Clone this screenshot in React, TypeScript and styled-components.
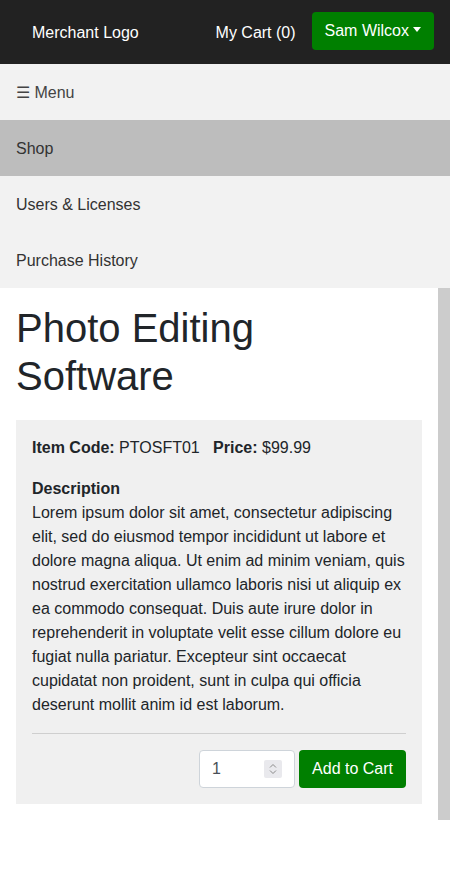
import styled, { createGlobalStyle } from 'styled-components';

const GlobalStyle = createGlobalStyle`
  * { box-sizing: border-box; }
  body {
    margin: 0;
    font-family: 'Liberation Sans', Arial, sans-serif;
    font-size: 16px;
    line-height: 1.5;
    color: #212529;
    background: #fff;
  }
`;

const navItems = ['Shop', 'Users & Licenses', 'Purchase History'];

export default function App() {
  return (
    <>
      <GlobalStyle />
      <TopBar>
        <Brand>Merchant Logo</Brand>
        <TopRight>
          <CartLink>My Cart (0)</CartLink>
          <UserButton>Sam Wilcox</UserButton>
        </TopRight>
      </TopBar>
      <SideNav>
        <NavRow $muted>☰ Menu</NavRow>
        {navItems.map(item => (
          <NavRow key={item} $active={item === 'Shop'}>
            {item}
          </NavRow>
        ))}
      </SideNav>
      <ContentRow>
        <Main>
          <Title>Photo Editing Software</Title>
          <ProductCard>
            <Meta>
              <b>Item Code:</b> PTOSFT01 &nbsp; <b>Price:</b> $99.99
            </Meta>
            <Description>
              <b>Description</b>
              <br />
              Lorem ipsum dolor sit amet, consectetur adipiscing elit, sed do eiusmod tempor
              incididunt ut labore et dolore magna aliqua. Ut enim ad minim veniam, quis nostrud
              exercitation ullamco laboris nisi ut aliquip ex ea commodo consequat. Duis aute irure
              dolor in reprehenderit in voluptate velit esse cillum dolore eu fugiat nulla pariatur.
              Excepteur sint occaecat cupidatat non proident, sunt in culpa qui officia deserunt
              mollit anim id est laborum.
            </Description>
            <Divider />
            <CartActions>
              <QtyWrap>
                <QtyInput type='number' defaultValue={1} min={1} />
                <Spinner aria-hidden>
                  <svg width='18' height='18' viewBox='0 0 18 18' fill='none'>
                    <path d='M6 7.5 9 4.5l3 3' stroke='#8a8a8a' strokeWidth='1' />
                    <path d='M6 10.5l3 3 3-3' stroke='#8a8a8a' strokeWidth='1' />
                  </svg>
                </Spinner>
              </QtyWrap>
              <AddButton>Add to Cart</AddButton>
            </CartActions>
          </ProductCard>
        </Main>
        <Gutter />
      </ContentRow>
    </>
  );
}

const TopBar = styled.header`
  height: 64px;
  background: #222222;
  display: flex;
  align-items: center;
  justify-content: space-between;
  padding: 1px 16px 0 32px;
`;

const Brand = styled.span`
  color: #fff;
  font-size: 16px;
`;

const TopRight = styled.div`
  display: flex;
  align-items: center;
  gap: 16px;
`;

const CartLink = styled.span`
  color: #fff;
  font-size: 16px;
`;

const UserButton = styled.button`
  font-family: inherit;
  font-size: 16px;
  line-height: 24px;
  height: 38px;
  margin-bottom: 3px;
  padding: 6px 13px;
  border: none;
  border-radius: 4px;
  background: #007f00;
  color: #fff;
  display: flex;
  align-items: center;

  &::after {
    content: '';
    display: inline-block;
    margin-left: 4px;
    margin-top: -4px;
    border-top: 5px solid #fff;
    border-left: 4px solid transparent;
    border-right: 4px solid transparent;
  }
`;

const SideNav = styled.nav`
  background: #f2f2f2;
  display: flex;
  flex-direction: column;
`;

const NavRow = styled.div<{ $active?: boolean; $muted?: boolean }>`
  height: 56px;
  display: flex;
  align-items: center;
  padding: 1px 16px 0;
  font-size: 16px;
  color: ${p => (p.$muted ? '#444' : '#333')};
  background: ${p => (p.$active ? '#bdbdbd' : 'transparent')};
`;

const ContentRow = styled.div`
  display: flex;
  align-items: stretch;
`;

const Main = styled.main`
  flex: 1;
  padding: 16px;
`;

const Gutter = styled.div`
  width: 12px;
  background: #cccccc;
`;

const Title = styled.h1`
  margin: 0 0 20px;
  font-size: 40px;
  font-weight: 400;
  line-height: 48px;
  color: #212529;
`;

const ProductCard = styled.section`
  background: #f0f0f0;
  padding: 16px;
`;

const Meta = styled.p`
  margin: 0 0 17px;
`;

const Description = styled.p`
  margin: 0;
`;

const Divider = styled.hr`
  border: 0;
  border-top: 1px solid #cfcfcf;
  margin: 16px 0 15px;
`;

const CartActions = styled.div`
  display: flex;
  justify-content: flex-end;
  align-items: center;
  gap: 4px;
`;

const QtyWrap = styled.div`
  position: relative;
  display: flex;
`;

const QtyInput = styled.input`
  width: 96px;
  height: 38px;
  padding: 6px 12px;
  font-family: inherit;
  font-size: 16px;
  color: #495057;
  border: 1px solid #ced4da;
  border-radius: 4px;
  background: #fff;
  -moz-appearance: textfield;

  &::-webkit-inner-spin-button,
  &::-webkit-outer-spin-button {
    -webkit-appearance: none;
    margin: 0;
  }
`;

const Spinner = styled.span`
  position: absolute;
  right: 13px;
  top: 10px;
  width: 18px;
  height: 18px;
  border-radius: 2px;
  background: #e9e9ed;
  display: flex;
  pointer-events: none;
`;

const AddButton = styled.button`
  font-family: inherit;
  font-size: 16px;
  line-height: 24px;
  height: 38px;
  margin-top: 1px;
  padding: 6px 13px;
  border: none;
  border-radius: 4px;
  background: #007f00;
  color: #fff;
`;
